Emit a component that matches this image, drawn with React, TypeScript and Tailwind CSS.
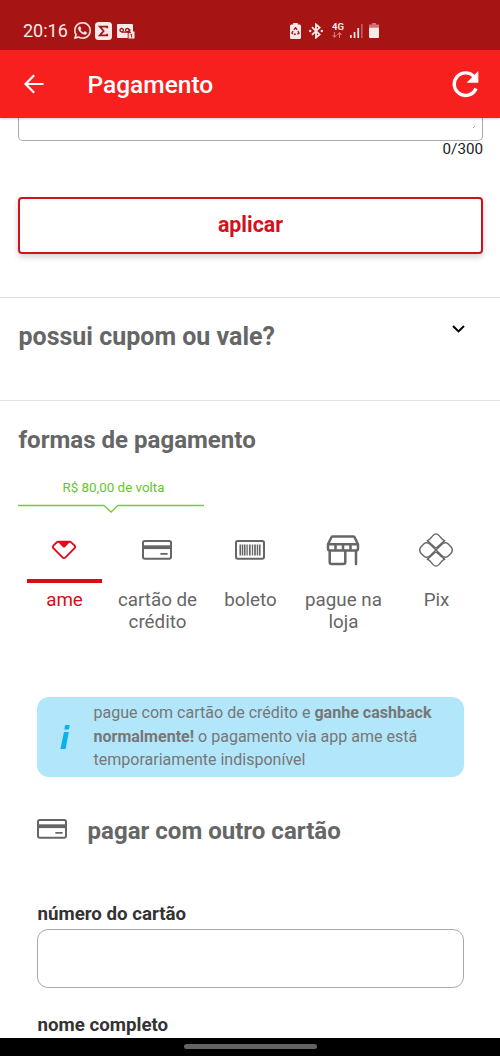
import type { ReactNode } from "react";

function WhatsAppIcon() {
  return (
    <svg width="17" height="17" viewBox="0 0 24 24" fill="#fbe9e9" stroke="#fbe9e9" strokeWidth="0.4">
      <path d="M17.472 14.382c-.297-.149-1.758-.867-2.03-.967-.273-.099-.471-.148-.67.15-.197.297-.767.966-.94 1.164-.173.199-.347.223-.644.075-.297-.15-1.255-.463-2.39-1.475-.883-.788-1.48-1.761-1.653-2.059-.173-.297-.018-.458.13-.606.134-.133.298-.347.446-.52.149-.174.198-.298.298-.497.099-.198.05-.371-.025-.52-.075-.149-.669-1.612-.916-2.207-.242-.579-.487-.5-.669-.51-.173-.008-.371-.01-.57-.01-.198 0-.52.074-.792.372-.272.297-1.04 1.016-1.04 2.479 0 1.462 1.065 2.875 1.213 3.074.149.198 2.096 3.2 5.077 4.487.709.306 1.262.489 1.694.625.712.227 1.36.195 1.871.118.571-.085 1.758-.719 2.006-1.413.248-.694.248-1.289.173-1.413-.074-.124-.272-.198-.57-.347m-5.421 7.403h-.004a9.87 9.87 0 01-5.031-1.378l-.361-.214-3.741.982.998-3.648-.235-.374a9.86 9.86 0 01-1.51-5.26c.001-5.45 4.436-9.884 9.888-9.884 2.64 0 5.122 1.03 6.988 2.898a9.825 9.825 0 012.893 6.994c-.003 5.45-4.437 9.884-9.885 9.884m8.413-18.297A11.815 11.815 0 0012.05 0C5.495 0 .16 5.335.157 11.892c0 2.096.547 4.142 1.588 5.945L.057 24l6.305-1.654a11.882 11.882 0 005.683 1.448h.005c6.554 0 11.89-5.335 11.893-11.893a11.821 11.821 0 00-3.48-8.413z" />
    </svg>
  );
}

function SigmaIcon() {
  return (
    <svg width="17" height="18" viewBox="0 0 17 18">
      <rect width="17" height="18" rx="3.5" fill="#fbe9e9" />
      <path d="M12.2 6.3V4.6H4.8L8.6 9l-3.8 4.4h7.4v-1.7" fill="none" stroke="#a01616" strokeWidth="1.8" />
    </svg>
  );
}

function VoicemailIcon() {
  return (
    <svg width="18" height="15" viewBox="0 0 18 15">
      <path d="M1 0h14a1 1 0 0 1 1 1v6.500h1.500v7H11.500V14H1a1 1 0 0 1-1-1V1a1 1 0 0 1 1-1Z" fill="#fbe9e9" />
      <g fill="none" stroke="#a01616" strokeWidth="1.3">
        <circle cx="4.700" cy="6.200" r="1.700" />
        <circle cx="10.300" cy="6.200" r="1.700" />
        <path d="M4.700 8.200h8V5" />
        <path d="M11.200 14V8.500M11 8.700h3" strokeWidth="0.9" />
        <path d="M13.400 10.700l1.200-.5v3.300" strokeWidth="1" />
      </g>
    </svg>
  );
}

function BatterySaverIcon() {
  return (
    <svg width="11" height="16" viewBox="0 0 11 16">
      <path d="M3.200 0h4.600v1.500h1.700A1.500 1.500 0 0 1 11 3v11.500a1.500 1.500 0 0 1-1.500 1.500h-8A1.500 1.500 0 0 1 0 14.500V3a1.500 1.500 0 0 1 1.500-1.500h1.700Z" fill="#fbe9e9" />
      <path d="M3.900 6.800 5.500 4.800l1.600 2M8 8l1 2.200-1.700.9M5.800 11.200H4M3 11l-1-1 1-2" fill="none" stroke="#a01616" strokeWidth="1.4" />
    </svg>
  );
}

function BluetoothIcon() {
  return (
    <svg width="14" height="16" viewBox="0 0 14 16">
      <path d="m3 4.200 7.600 7.200L7 14.600V1.400l3.600 3.200L3 11.800" fill="none" stroke="#fbe9e9" strokeWidth="1.800" />
      <circle cx="1.200" cy="8" r="1.200" fill="#fbe9e9" />
      <circle cx="12.800" cy="8" r="1.200" fill="#fbe9e9" />
    </svg>
  );
}

function DataArrowsIcon() {
  return (
    <svg width="10" height="6" viewBox="0 0 10 6" fill="none" stroke="#d27676" strokeWidth="1.1">
      <path d="M2.500 0v5.200M.5 3.200l2 2 2-2M7.500 6V.8M5.500 2.800l2-2 2 2" />
    </svg>
  );
}

function SignalIcon() {
  return (
    <svg width="13" height="14" viewBox="0 0 13 14">
      <path d="M0 11h1.700v3H0ZM3.700 8h1.700v6H3.700ZM7.400 4h1.700v10H7.400Z" fill="#fbe9e9" />
      <path d="M11.100 0h1.500v14h-1.500Z" fill="#c86464" />
    </svg>
  );
}

function BatteryIcon() {
  return (
    <svg width="10" height="15" viewBox="0 0 10 15">
      <path d="M3 0h4v1.500h3V5H0V1.500h3Z" fill="#cf7474" />
      <path d="M0 4.700h10V14a1 1 0 0 1-1 1H1a1 1 0 0 1-1-1Z" fill="#fbe9e9" />
    </svg>
  );
}

function BackIcon() {
  return (
    <svg width="20" height="20" viewBox="0 0 20 20" fill="none" stroke="#fff" strokeWidth="2.2">
      <path d="M19.500 10H2M10.200 1.200 1.500 10l8.700 8.800" />
    </svg>
  );
}

function ReloadIcon() {
  return (
    <svg width="27" height="27" viewBox="0 0 27 27">
      <path d="M22 5.600A11.300 11.300 0 1 0 24 17.500" fill="none" stroke="#fff" strokeWidth="3.4" />
      <path d="M26.300 0v11.700H14.600Z" fill="#fff" />
    </svg>
  );
}

function ChevronIcon() {
  return (
    <svg width="13" height="9" viewBox="0 0 13 9" fill="none" stroke="#000" strokeWidth="2">
      <path d="m1 1 5.500 5.400L12 1" />
    </svg>
  );
}

function AmeIcon() {
  return (
    <svg width="26" height="20" viewBox="0 0 26 20">
      <path d="M7.500 1.600h11q1 0 1.700.7l3.200 3.100c.9.900.9 2.100 0 3L14.200 17.600c-.7.700-1.700.7-2.400 0L2.600 8.400c-.9-.9-.9-2.100 0-3l3.200-3.100q.7-.7 1.700-.7Z" fill="none" stroke="#e00b1c" strokeWidth="1.9" strokeLinejoin="round" />
      <path d="M6.500 1.500h13l-5.300 5.400c-.7.700-1.700.7-2.400 0Z" fill="#e00b1c" />
    </svg>
  );
}

function CardIcon() {
  return (
    <svg width="30" height="20" viewBox="0 0 30 20">
      <rect x="1" y="1" width="28" height="17.800" rx="1.800" fill="none" stroke="#666" strokeWidth="2" />
      <path d="M1 7.200h28" stroke="#666" strokeWidth="3.800" />
      <path d="M19 13.800h6" stroke="#666" strokeWidth="1.700" strokeLinecap="round" />
    </svg>
  );
}

function BarcodeIcon() {
  return (
    <svg width="30" height="20" viewBox="0 0 30 20" fill="none" stroke="#666">
      <rect x="1" y="1" width="28" height="17.800" rx="1.800" strokeWidth="2" />
      <path d="M5.300 4.500v11M9.700 4.500v11M14.800 4.500v11M20 4.500v11M24.700 4.500v11" strokeWidth="1.7" />
      <path d="M7.500 4.500v11M12.100 4.500v11M17.500 4.500v11M22.400 4.500v11" strokeWidth="1.3" />
    </svg>
  );
}

function StoreIcon() {
  return (
    <svg width="34" height="31" viewBox="0 0 34 31" fill="none" stroke="#666" strokeWidth="2.5" strokeLinejoin="round" strokeLinecap="round">
      <path d="M6.500 1.500h21q.8 0 1.100.8L32 9.300H2l3.400-7q.3-.8 1.100-.8ZM2 9.300v4.300q0 2 2 2h26q2 0 2-2V9.300M9.500 9.300v6.300M17 9.300v6.300M24.500 9.300v6.300" />
      <path d="M3.700 16v11q0 2 2 2h11.600q2 0 2-2V16M30 16v13" />
    </svg>
  );
}

function PixIcon() {
  return (
    <svg width="34" height="34" viewBox="0 0 34 34" fill="none" stroke="#666" strokeWidth="1.4" strokeLinejoin="round">
      <path d="M8.200 7.600Q9.600 7.400 10.700 6.200L13.900 2.600Q17-.9 20.100 2.600L23.300 6.200Q24.400 7.400 25.800 7.600L18 14.400Q17 15.300 16 14.400Z" />
      <path d="M8.200 26.400Q9.600 26.600 10.700 27.800L13.900 31.400Q17 34.900 20.100 31.400L23.300 27.800Q24.400 26.600 25.800 26.400L18 19.600Q17 18.700 16 19.600Z" />
      <path d="M17 17 11 11.200Q9.500 9.700 7.200 9.800Q5.800 9.900 4.800 10.900L2 13.700Q-.6 17 2 20.300L4.800 23.100Q5.800 24.100 7.200 24.200Q9.500 24.300 11 22.800Z" />
      <path d="M17 17 23 11.200Q24.500 9.700 26.800 9.800Q28.200 9.900 29.200 10.900L32 13.700Q34.600 17 32 20.300L29.200 23.100Q28.200 24.100 26.800 24.200Q24.500 24.300 23 22.800Z" />
    </svg>
  );
}

function StatusBar() {
  return (
    <div className="flex h-[50px] shrink-0 items-start bg-[#a61414] pl-[23px] text-[#fbe9e9]">
      <span className="mt-[20px] w-[51px] whitespace-nowrap text-[18px] leading-[22px]">20:16</span>
      <span className="mt-[22px] w-[21px]"><WhatsAppIcon /></span>
      <span className="mt-[22px] w-[22px]"><SigmaIcon /></span>
      <span className="mt-[24px] w-[173px]"><VoicemailIcon /></span>
      <span className="mt-[23px] w-[19px]"><BatterySaverIcon /></span>
      <span className="mt-[23px] w-[23px]"><BluetoothIcon /></span>
      <span className="mt-[22px] flex w-[18px] flex-col">
        <span className="text-[9.5px] font-bold leading-[10px]">4G</span>
        <DataArrowsIcon />
      </span>
      <span className="mt-[24px] w-[19px]"><SignalIcon /></span>
      <span className="mt-[23px]"><BatteryIcon /></span>
    </div>
  );
}

function PaymentTab({ icon, label, active = false }: { icon: ReactNode; label: string; active?: boolean }) {
  return (
    <button className="flex flex-col items-center px-[6px]">
      <span className="mr-px flex h-[48px] items-center">{icon}</span>
      <span className={active ? "mt-[5px] h-[4px] w-[75px] bg-[#d90d19]" : "mt-[5px] h-[4px] w-[75px]"} />
      <span className={active ? "mt-[6px] text-[18.8px] leading-[22px] text-[#d90d19]" : "mt-[6px] text-[18.8px] leading-[22px] text-[#666]"}>{label}</span>
    </button>
  );
}

export default function App() {
  return (
    <div className="flex h-[1056px] w-[500px] flex-col overflow-hidden bg-white font-[Roboto,sans-serif]">
      <StatusBar />
      <header className="z-10 flex h-[68px] shrink-0 items-center bg-[#f81f1f] pl-[24px] pr-[21px] shadow-[0_1px_2px_rgba(0,0,0,0.2)]">
        <BackIcon />
        <h1 className="ml-[43.5px] mt-[2px] flex-1 text-[24.5px] font-medium leading-[30px] text-white">Pagamento</h1>
        <ReloadIcon />
      </header>

      <main className="flex min-h-0 flex-1 flex-col overflow-hidden">
        <section className="flex h-[179px] shrink-0 flex-col pl-[18px] pr-[17px]">
          <div className="flex h-[23px] shrink-0 items-start justify-end rounded-b-[5px] border border-t-0 border-[#aaa] pr-[6px] pt-[7px]">
            <svg width="4" height="4" viewBox="0 0 4 4" stroke="#999" strokeWidth="1"><path d="M1 3 2.800 1.300" /></svg>
          </div>
          <span className="-mt-px self-end text-[15.2px] leading-[18px] text-[#222]">0/300</span>
          <button className="mt-[39px] h-[57px] rounded-[4px] border-2 border-[#d2111c] pb-[1px] text-[21.4px] font-bold leading-[24px] text-[#d2111c] shadow-[0_3px_6px_rgba(0,0,0,0.18)]">aplicar</button>
        </section>

        <section className="flex h-[103px] shrink-0 items-start justify-between border-t border-[#e3e3e3] pl-[18.5px] pr-[35px]">
          <h2 className="mt-[24px] text-[25px] font-bold leading-[30px] text-[#666]">possui cupom ou vale?</h2>
          <span className="mt-[27px]"><ChevronIcon /></span>
        </section>

        <section className="flex shrink-0 flex-col border-t border-[#e3e3e3]">
          <h2 className="ml-[18.5px] mt-[24px] text-[24.05px] font-bold leading-[30px] text-[#666]">formas de pagamento</h2>
          <div className="ml-[18px] mt-[24px] flex w-[186px] flex-col">
            <span className="pl-[5px] text-center text-[13.4px] leading-[18px] text-[#64c81e]">R$ 80,00 de volta</span>
            <svg className="mt-[7px]" width="186" height="9" viewBox="0 0 186 9" fill="none" stroke="#78c83c" strokeWidth="1.3">
              <path d="M0 1.500h86l7 6.500 7-6.500h86" />
            </svg>
          </div>
          <div className="ml-[18px] mt-[13px] grid h-[118px] w-[465px] grid-cols-5 items-start">
            <PaymentTab icon={<AmeIcon />} label="ame" active />
            <PaymentTab icon={<CardIcon />} label="cartão de crédito" />
            <PaymentTab icon={<BarcodeIcon />} label="boleto" />
            <PaymentTab icon={<StoreIcon />} label="pague na loja" />
            <PaymentTab icon={<PixIcon />} label="Pix" />
          </div>
        </section>

        <section className="mt-[53px] flex shrink-0 flex-col pl-[37px] pr-[36px]">
          <div className="flex h-[80px] items-start rounded-[12px] bg-[#b2e6fa]">
            <svg className="ml-[23px] mt-[28px]" width="10" height="25" viewBox="0 0 10 25" fill="#0ab0f0">
              <path d="M5.200 0h4.600l-.9 4.500H4.300ZM4 7h4.800L5.600 24H.4Z" />
            </svg>
            <p className="ml-[23.5px] mt-[4px] whitespace-nowrap text-[16.05px] leading-[23.7px] text-[#777]">
              pague com cartão de crédito e <b>ganhe cashback</b><br />
              <b>normalmente!</b> o pagamento via app ame está<br />
              temporariamente indisponível
            </p>
          </div>
          <div className="mt-[39px] flex h-[30px] items-start">
            <span className="mt-[3px]"><CardIcon /></span>
            <h3 className="ml-[20.5px] text-[24.05px] font-bold leading-[30px] text-[#666]">pagar com outro cartão</h3>
          </div>
          <label className="ml-[0.5px] mt-[57px] text-[18.7px] font-bold leading-[22px] text-[#333]" htmlFor="card">número do cartão</label>
          <input id="card" className="mt-[4px] h-[59px] rounded-[11px] border border-[#aaa]" />
          <label className="ml-[0.5px] mt-[26px] text-[18.7px] font-bold leading-[22px] text-[#333]">nome completo</label>
        </section>
      </main>

      <nav className="flex h-[18px] shrink-0 justify-center bg-black pt-[6px]">
        <span className="h-[5px] w-[133px] rounded-full bg-[#626262]" />
      </nav>
    </div>
  );
}
